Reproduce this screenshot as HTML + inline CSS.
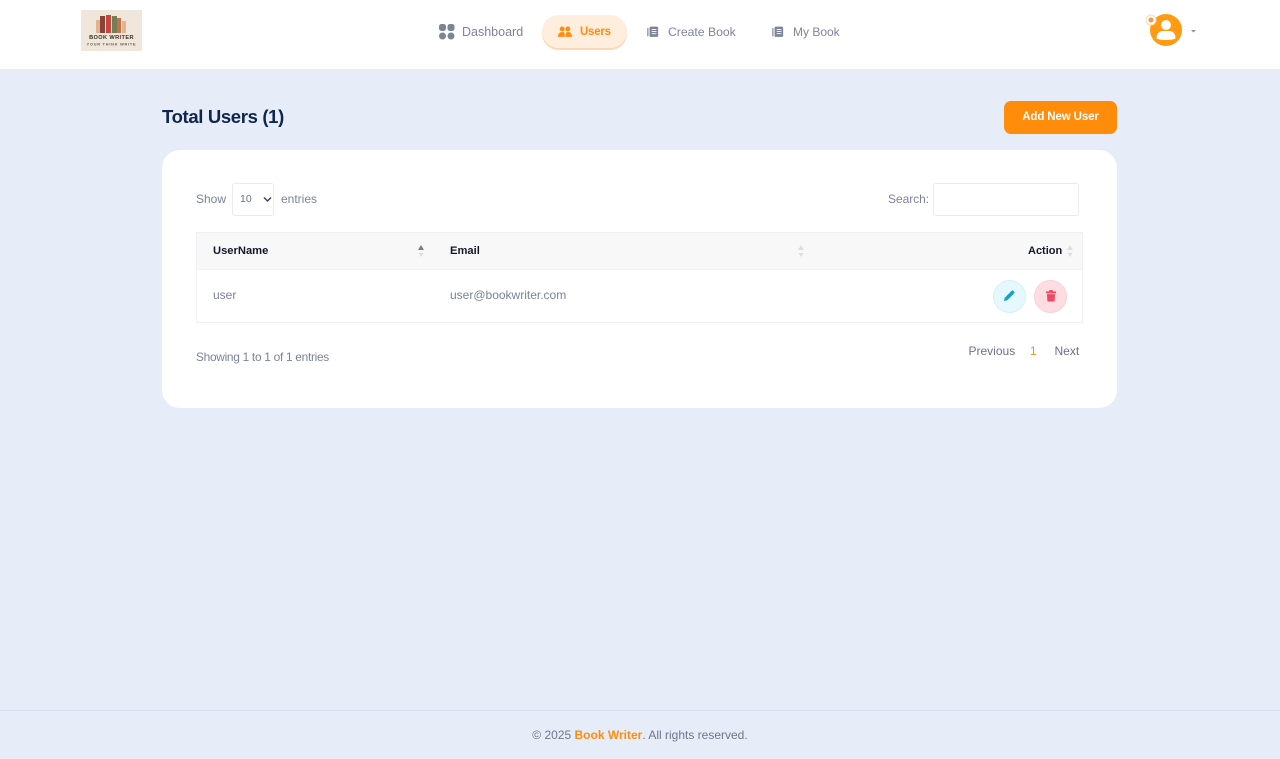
<!DOCTYPE html>
<html lang="en"><head><meta charset="utf-8"><title>Users</title>
<style>
*{box-sizing:border-box}
html,body{margin:0;padding:0}
body{width:1280px;height:759px;background:#e6edf9;position:relative;overflow:hidden;font-family:"Liberation Sans",sans-serif;color:#7c8299}
.t{position:absolute;white-space:nowrap;line-height:16px;font-size:12px}
.a{position:absolute}
</style></head><body>
<div class="a" style="left:0;top:0;width:1280px;height:69px;background:#fff"></div>
<svg class="a" style="left:81px;top:10px" width="61" height="41" viewBox="0 0 61 41">
<rect width="61" height="41" fill="#efe7db"/>
<rect x="15" y="10" width="4" height="13" fill="#e0b48e"/><rect x="19" y="6" width="5" height="17" fill="#8a4238"/>
<rect x="25" y="5" width="5" height="18" fill="#c9463a"/><rect x="31" y="6" width="5" height="17" fill="#6f7f58"/>
<rect x="36" y="8" width="4" height="15" fill="#c96f4c"/><rect x="41" y="11" width="4" height="12" fill="#e0b48e"/>
<text x="30.5" y="29" text-anchor="middle" font-family="Liberation Sans" font-size="5.6" font-weight="700" fill="#3c2b25" letter-spacing=".4">BOOK WRITER</text>
<text x="30.5" y="35.500" text-anchor="middle" font-family="Liberation Sans" font-size="3.8" font-weight="700" fill="#6a5a50" letter-spacing=".8">YOUR THINK WRITE</text>
</svg>
<svg class="a" style="left:439px;top:24px" width="16" height="16" viewBox="0 0 16 16" fill="#7d8499"><rect x="0" y="0" width="7" height="7" rx="2.500"/><rect x="8.500" y="0" width="7" height="7" rx="2.500"/><circle cx="3.500" cy="12" r="3.500"/><circle cx="12" cy="12" r="3.500"/></svg>
<div class="t" style="left:462px;top:24px;font-size:12.5px;color:#7d8499">Dashboard</div>
<div class="a" style="left:542px;top:15px;width:85px;height:33px;border-radius:17px;background:#ffeedd;box-shadow:0 2px 0 #fbd9b4"></div>
<svg class="a" style="left:558px;top:26px" width="14" height="12" viewBox="0 0 16 13" fill="#ff8c0a"><circle cx="4.800" cy="3" r="2.800"/><circle cx="11.200" cy="3" r="2.800"/><path d="M0 12c0-3.500 1.800-5.500 4.800-5.500S7.500 8 7.700 12H0zM8.500 12c.2-4 .8-5.500 2.700-5.500 3 0 4.800 2 4.800 5.500H8.500z"/></svg>
<div class="t" style="left:580px;top:24px;font-size:11.500px;letter-spacing:-.25px;font-weight:700;color:#ff8c0a">Users</div>
<svg class="a" style="left:647px;top:26px" width="12" height="12" viewBox="0 0 14 14"><rect x="3" y=".7" width="10" height="12" rx="1.500" fill="#7d8499"/><path d="M1 2.500v9.500" stroke="#7d8499" stroke-width="1.400"/><path d="M5.500 4h5.500M5.500 6.500h5.500M5.500 9h5.500" stroke="#fff" stroke-width="1"/></svg>
<div class="t" style="left:668px;top:24px;font-size:12.200px;color:#7d8499">Create Book</div>
<svg class="a" style="left:772px;top:26px" width="12" height="12" viewBox="0 0 14 14"><rect x="3" y=".7" width="10" height="12" rx="1.500" fill="#7d8499"/><path d="M1 2.500v9.500" stroke="#7d8499" stroke-width="1.400"/><path d="M5.500 4h5.500M5.500 6.500h5.500M5.500 9h5.500" stroke="#fff" stroke-width="1"/></svg>
<div class="t" style="left:793px;top:24px;font-size:12px;color:#7d8499">My Book</div>
<svg class="a" style="left:1144px;top:12px" width="56" height="36" viewBox="0 0 56 36">
<circle cx="22" cy="18" r="16" fill="#ff9a12"/>
<circle cx="22" cy="13" r="5" fill="#fff"/><path d="M12.500 26.500c0-5 3-7.500 5.500-7.500h8c2.500 0 5.500 2.500 5.500 7.500-3 2-16 2-19 0z" fill="#fff"/>
<circle cx="7" cy="8" r="5" fill="#fff" stroke="#fcdcb5"/><circle cx="7" cy="8" r="2.500" fill="#f2994a"/>
<path d="M47 18h5l-2.500 2.500z" fill="#8a90a3"/>
</svg>
<div class="t" style="left:162px;top:105px;font-size:18.500px;letter-spacing:-.35px;line-height:24px;font-weight:700;color:#10254e">Total Users (1)</div>
<div class="a" style="left:1004px;top:101px;width:113px;height:33px;border-radius:7px;background:#ff8c0a;color:#fff;font-size:11.500px;letter-spacing:-.12px;font-weight:700;text-align:center;line-height:32px">Add New User</div>
<div class="a" style="left:162px;top:150px;width:955px;height:258px;border-radius:18px;background:#fff"></div>
<div class="t" style="left:196px;top:191px">Show</div>
<div class="a" style="left:232px;top:183px;width:42px;height:33px;border:1px solid #e8eaf0;border-radius:3px"></div>
<div class="t" style="left:240px;top:191px;font-size:10.500px;color:#6b7186">10</div>
<svg class="a" style="left:263px;top:196px" width="9" height="7" viewBox="0 0 9 7"><path d="M1 1.500l3.500 3.500 3.500-3.500" fill="none" stroke="#3f4557" stroke-width="1.500"/></svg>
<div class="t" style="left:281px;top:191px">entries</div>
<div class="t" style="left:888px;top:191px;letter-spacing:-.05px">Search:</div>
<div class="a" style="left:933px;top:183px;width:146px;height:33px;border:1px solid #e8eaf0;border-radius:3px"></div>
<div class="a" style="left:196px;top:232px;width:887px;height:91px;border:1px solid #eff0f4"></div>
<div class="a" style="left:197px;top:233px;width:885px;height:37px;background:#f8f8f8;border-bottom:1px solid #eff0f4"></div>
<div class="t" style="left:213px;top:243px;font-size:11.200px;font-weight:700;color:#14172b">UserName</div>
<div class="t" style="left:450px;top:243px;font-size:11.200px;font-weight:700;color:#14172b">Email</div>
<div class="t" style="left:1028px;top:243px;font-size:11px;font-weight:700;color:#14172b">Action</div>
<svg class="a" style="left:417px;top:244px" width="8" height="14" viewBox="0 0 8 14"><path d="M4 1l3 5H1z" fill="#787d8c"/><path d="M4 13l-2.500-4h5z" fill="#dcdee4"/></svg>
<svg class="a" style="left:797px;top:244px" width="8" height="14" viewBox="0 0 8 14" fill="#dcdee4"><path d="M4 1l3 5H1zM4 13l-2.500-4h5z"/></svg>
<svg class="a" style="left:1066px;top:244px" width="8" height="14" viewBox="0 0 8 14" fill="#dcdee4"><path d="M4 1l3 5H1zM4 13l-2.500-4h5z"/></svg>
<div class="t" style="left:213px;top:287px">user</div>
<div class="t" style="left:450px;top:287px">user@bookwriter.com</div>
<div class="a" style="left:993px;top:280px;width:33px;height:33px;border-radius:50%;background:#e4f8fd;border:1px solid #d3f1f9"></div>
<svg class="a" style="left:1003px;top:289px" width="13" height="13" viewBox="0 0 13 13"><path d="M1 12l.7-3.300L8.700 1.700a1 1 0 0 1 1.400 0l1.200 1.200a1 1 0 0 1 0 1.400L4.300 11.300z" fill="#1b9fc4"/></svg>
<div class="a" style="left:1034px;top:280px;width:33px;height:33px;border-radius:50%;background:#fddde2;border:1px solid #fbcfd6"></div>
<svg class="a" style="left:1045.500px;top:290px" width="10" height="12" viewBox="0 0 11 13" fill="#ee4a63"><rect x="0" y="1.500" width="11" height="2"/><rect x="3.500" y="0" width="4" height="2"/><path d="M1 4.500h9l-.6 8H1.600z"/></svg>
<div class="t" style="left:196px;top:349px;letter-spacing:-.29px;font-size:11.900px">Showing 1 to 1 of 1 entries</div>
<div class="t" style="left:968.500px;top:343px;color:#6b7186">Previous</div>
<div class="t" style="left:1030px;top:343px;color:#ff8c0a">1</div>
<div class="t" style="left:1054.500px;top:343px;color:#6b7186">Next</div>
<div class="a" style="left:0;top:710px;width:1280px;height:1px;background:#d8dfec"></div>
<div class="t" style="left:0;width:1280px;text-align:center;top:727px;font-size:12px;color:#6f7689">© 2025 <b style="color:#ff8c0a">Book Writer</b>. All rights reserved.</div>
</body></html>
